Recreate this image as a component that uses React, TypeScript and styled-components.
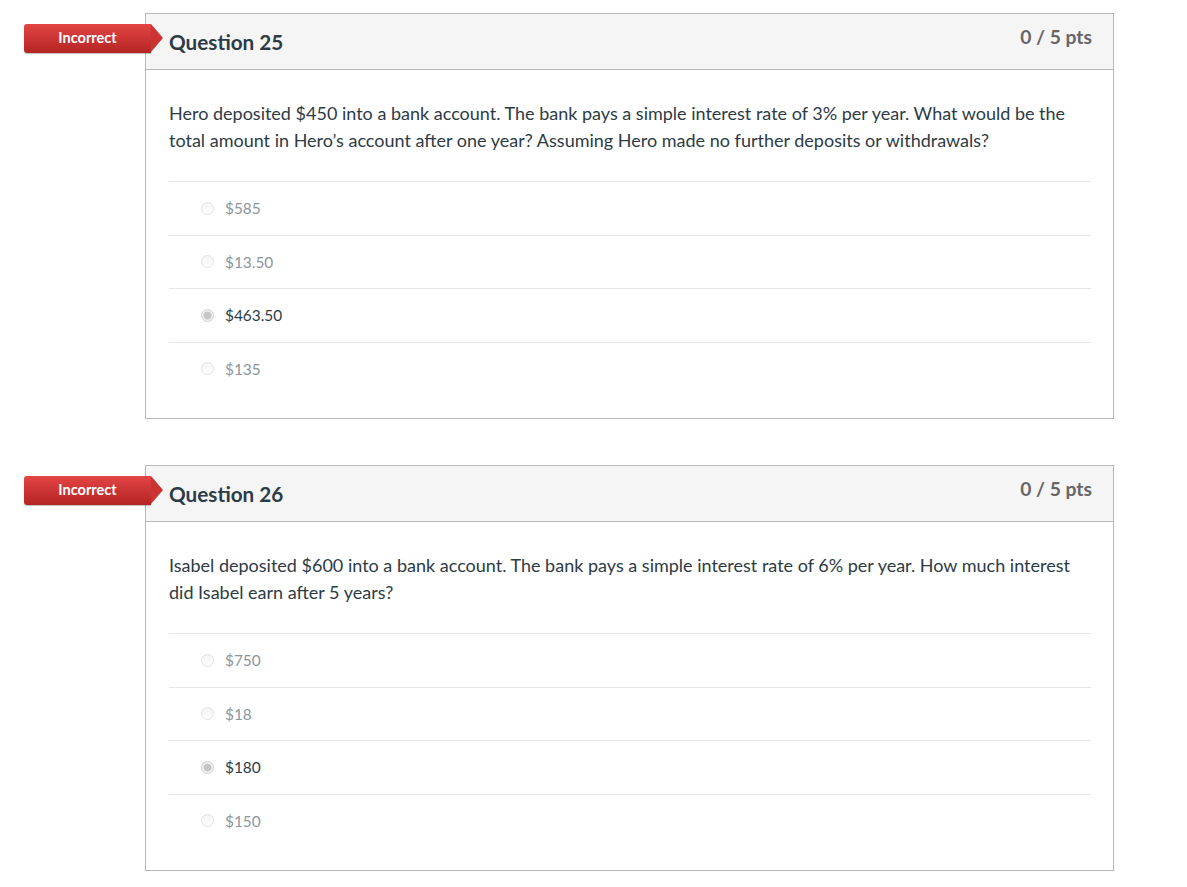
import React from "react";
import styled, { createGlobalStyle } from "styled-components";

const Global = createGlobalStyle`
  html, body { margin: 0; padding: 0; background: #fff; }
  body { font-family: Lato, "Noto Sans", "Liberation Sans", sans-serif; color: #2d3b45; }
`;

const Page = styled.div`
  padding: 13px 0 0 145px;
  display: flex;
  flex-direction: column;
  gap: 46px;
  width: 969px;
`;

const Card = styled.div`
  position: relative;
  border: 1px solid #b8b8b8;
  background: #fff;
`;

const Badge = styled.div`
  position: absolute;
  left: -122px;
  top: 10px;
  width: 127px;
  height: 29px;
  background: linear-gradient(#e24544, #b52424);
  border-radius: 3px 0 0 3px;
  box-shadow: 0 1px 1px rgba(0, 0, 0, 0.25);
  color: #fff;
  font-size: 14.5px;
  font-weight: 700;
  display: flex;
  align-items: center;
  justify-content: center;
  padding-bottom: 2px;
  box-sizing: border-box;
  &::after {
    content: "";
    position: absolute;
    right: -12px;
    top: 0;
    width: 0;
    height: 0;
    border-top: 14.5px solid transparent;
    border-bottom: 14.5px solid transparent;
    border-left: 12px solid #cc3434;
  }
`;

const Header = styled.div`
  height: 55px;
  background: #f5f5f5;
  border-bottom: 1px solid #b8b8b8;
  display: flex;
  justify-content: space-between;
  align-items: flex-start;
  padding: 0 21px 0 23px;
`;

const Title = styled.div`
  font-size: 20.7px;
  font-weight: 700;
  color: #2d3b45;
  margin-top: 16px;
`;

const Points = styled.div`
  font-size: 19.3px;
  font-weight: 700;
  color: #666;
  margin-top: 11px;
`;

const Body = styled.div`
  padding: 30px 22px 23px 23px;
`;

const QText = styled.div`
  font-size: 18px;
  line-height: 27px;
  color: #2d3b45;
  margin-bottom: 27px;
`;

const Answer = styled.div`
  border-top: 1px solid #e6e6e6;
  height: 52.5px;
  display: flex;
  align-items: center;
  padding-left: 32px;
  gap: 11px;
`;

const Radio = styled.span<{ $checked?: boolean }>`
  width: 13px;
  height: 13px;
  border-radius: 50%;
  box-sizing: border-box;
  border: 1px solid ${(p) => (p.$checked ? "#d0d0d0" : "#e2e2e2")};
  background: ${(p) =>
    p.$checked
      ? "radial-gradient(circle, #c6c6c6 0 3.5px, #f2f2f2 4.5px)"
      : "linear-gradient(#f4f4f4, #fff)"};
  flex: none;
`;

const AText = styled.span<{ $checked?: boolean }>`
  font-size: 15.4px;
  color: ${(p) => (p.$checked ? "#2d3b45" : "#8b969e")};
`;

type Q = { n: number; text: string; answers: string[]; sel: number };

const questions: Q[] = [
  {
    n: 25,
    text:
      "Hero deposited $450 into a bank account. The bank pays a simple interest rate of 3% per year. What would be the total amount in Hero’s account after one year? Assuming Hero made no further deposits or withdrawals?",
    answers: ["$585", "$13.50", "$463.50", "$135"],
    sel: 2,
  },
  {
    n: 26,
    text:
      "Isabel deposited $600 into a bank account. The bank pays a simple interest rate of 6% per year. How much interest did Isabel earn after 5 years?",
    answers: ["$750", "$18", "$180", "$150"],
    sel: 2,
  },
];

export default function App() {
  return (
    <>
      <Global />
      <Page>
        {questions.map((q) => (
          <Card key={q.n}>
            <Badge>Incorrect</Badge>
            <Header>
              <Title>Question {q.n}</Title>
              <Points>0 / 5 pts</Points>
            </Header>
            <Body>
              <QText>{q.text}</QText>
              {q.answers.map((a, i) => (
                <Answer key={a}>
                  <Radio $checked={i === q.sel} />
                  <AText $checked={i === q.sel}>{a}</AText>
                </Answer>
              ))}
            </Body>
          </Card>
        ))}
      </Page>
    </>
  );
}
